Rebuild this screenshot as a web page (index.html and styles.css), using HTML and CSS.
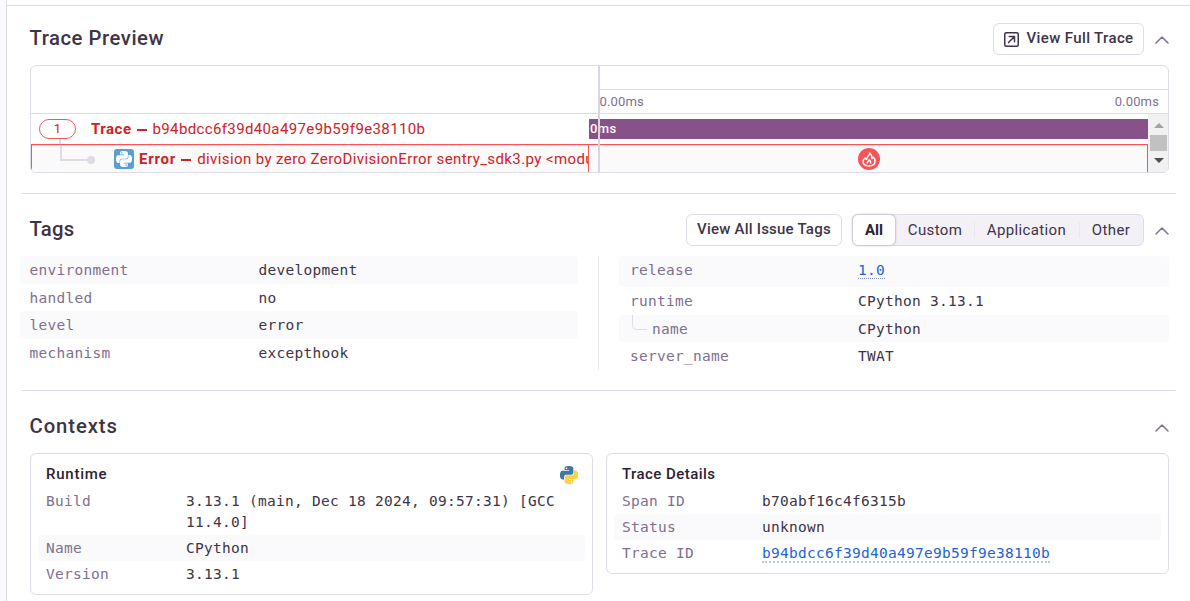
FILE: index.html
```html
<!DOCTYPE html>
<html lang="en">
<head>
<meta charset="utf-8">
<title>Issue details</title>
<link rel="stylesheet" href="styles.css">
</head>
<body>
<svg class="defs" width="0" height="0" aria-hidden="true">
  <symbol id="py-top" viewBox="0 0 24 24"><path d="M14.25.18l.9.2.73.26.59.3.45.32.34.34.25.34.16.33.1.3.04.26.02.2-.01.13V8.5l-.05.63-.13.55-.21.46-.26.38-.3.31-.33.25-.35.19-.35.14-.33.1-.3.07-.26.04-.21.02H8.77l-.69.05-.59.14-.5.22-.41.27-.33.32-.27.35-.2.36-.15.37-.1.35-.07.32-.04.27-.02.21v3.06H3.17l-.21-.03-.28-.07-.32-.12-.35-.18-.36-.26-.36-.36-.35-.46-.32-.59-.28-.73-.21-.88-.14-1.05-.05-1.23.06-1.22.16-1.04.24-.87.32-.71.36-.57.4-.44.42-.33.42-.24.4-.16.36-.1.32-.05.24-.01h.16l.06.01h8.16v-.83H6.18l-.01-2.75-.02-.37.05-.34.11-.31.17-.28.25-.26.31-.23.38-.2.44-.18.51-.15.58-.12.64-.1.71-.06.77-.04.84-.02 1.27.05zm-6.3 1.98l-.23.33-.08.41.08.41.23.34.33.22.41.09.41-.09.33-.22.23-.34.08-.41-.08-.41-.23-.33-.33-.22-.41-.09-.41.09z"/></symbol>
  <symbol id="py-bottom" viewBox="0 0 24 24"><path d="M21.04 6.11l.28.06.32.12.35.18.36.27.36.35.35.47.32.59.28.73.21.88.14 1.04.05 1.23-.06 1.23-.16 1.04-.24.86-.32.71-.36.57-.4.45-.42.33-.42.24-.4.16-.36.09-.32.05-.24.02-.16-.01h-8.22v.82h5.84l.01 2.76.02.36-.05.34-.11.31-.17.29-.25.25-.31.24-.38.2-.44.17-.51.15-.58.13-.64.09-.71.07-.77.04-.84.01-1.27-.04-1.07-.14-.9-.2-.73-.25-.59-.3-.45-.33-.34-.34-.25-.34-.16-.33-.1-.3-.04-.25-.02-.2.01-.13v-5.34l.05-.64.13-.54.21-.46.26-.38.3-.32.33-.24.35-.2.35-.14.33-.1.3-.06.26-.04.21-.02.13-.01h5.84l.69-.05.59-.14.5-.21.41-.28.33-.32.27-.35.2-.36.15-.36.1-.35.07-.32.04-.28.02-.21V6.07h2.09l.14.01zm-6.47 14.25l-.23.33-.08.41.08.41.23.33.33.23.41.08.41-.08.33-.23.23-.33.08-.41-.08-.41-.23-.33-.33-.23-.41-.08-.41.08z"/></symbol>
  <symbol id="chevron" viewBox="0 0 14 8"><path d="M1 7 7 1l6 6" fill="none" stroke="#80708f" stroke-width="1.5" stroke-linecap="round" stroke-linejoin="round"/></symbol>
</svg>
<div class="page">
  <main class="panel">
    <section class="section trace">
      <header class="head">
        <h2 class="title t-trace">Trace Preview</h2>
        <div class="actions">
          <button class="btn btn-trace">
            <svg width="15" height="15" viewBox="0 0 15 15" fill="none" stroke="#3e3446" stroke-width="1.5" stroke-linecap="round" stroke-linejoin="round"><rect x=".75" y=".75" width="13.5" height="13.5" rx="1.5"/><path d="M4.5 10.5 10.3 4.7M5.2 4.5h5.3v5.3"/></svg>
            <span>View Full Trace</span>
          </button>
          <svg class="chev" width="14" height="8"><use href="#chevron"/></svg>
        </div>
      </header>
      <div class="tracebox">
        <div class="scale">
          <div></div>
          <div class="ticks"><span>0.00ms</span><span>0.00ms</span></div>
        </div>
        <div class="body">
          <div class="rows">
            <div class="row">
              <div class="cell root"><span class="count">1</span><b class="b-trace">Trace</b><i class="dash"></i><span class="tid">b94bdcc6f39d40a497e9b59f9e38110b</span></div>
              <div class="bar">0ms</div>
            </div>
            <div class="row err">
              <div class="cell">
                <span class="link"></span>
                <span class="pyicon"><svg width="16" height="16" fill="#fff"><use href="#py-top"/><use href="#py-bottom"/></svg></span>
                <b class="b-error">Error</b><i class="dash"></i><span class="msg">division by zero ZeroDivisionError sentry_sdk3.py &lt;module&gt;</span>
              </div>
              <div class="lane">
                <span class="fire"><svg width="14" height="15" viewBox="0 0 14 15" fill="none" stroke="#fff" stroke-width="1.5" stroke-linejoin="round" stroke-linecap="round"><path d="M7.800 1C7.500 3.500 5 4.500 4.600 7.300L3 6C1.700 7 1 8.200 1 9.600c0 2.700 2.400 4.400 6 4.400s6-1.800 6-4.700c0-1.700-.6-3.200-1.900-4.300L9.900 6.400C9.900 4.200 9.200 2.300 7.800 1z"/><path d="M5.200 10.900C5.400 9.600 6.900 9.200 7.200 7.900 8.300 8.700 8.900 9.700 8.700 10.900"/></svg></span>
              </div>
            </div>
          </div>
          <div class="scroll"><i class="up"></i><i class="thumb"></i><i class="down"></i></div>
        </div>
        <span class="divider"></span>
      </div>
    </section>
    <section class="section tags">
      <header class="head">
        <h2 class="title t-tags">Tags</h2>
        <div class="actions">
          <button class="btn btn-tags"><span>View All Issue Tags</span></button>
          <div class="segs"><span class="seg on">All</span><span class="seg s2">Custom</span><span class="seg s3">Application</span><span class="seg s4">Other</span></div>
          <svg class="chev" width="14" height="8"><use href="#chevron"/></svg>
        </div>
      </header>
      <div class="cols">
        <div class="col">
          <div class="kv"><span>environment</span><em>development</em></div>
          <div class="kv"><span>handled</span><em>no</em></div>
          <div class="kv"><span>level</span><em>error</em></div>
          <div class="kv"><span>mechanism</span><em>excepthook</em></div>
        </div>
        <div class="sep"></div>
        <div class="col right">
          <div class="kv tall"><span>release</span><em><a class="dot">1.0</a></em></div>
          <div class="kv"><span>runtime</span><em>CPython 3.13.1</em></div>
          <div class="kv"><span class="child"><i></i>name</span><em>CPython</em></div>
          <div class="kv"><span>server_name</span><em>TWAT</em></div>
        </div>
      </div>
    </section>
    <section class="section contexts">
      <header class="head">
        <h2 class="title t-ctx">Contexts</h2>
        <svg class="chev" width="14" height="8"><use href="#chevron"/></svg>
      </header>
      <div class="cards">
        <div class="card">
          <div class="cardhead"><h3 class="h-run">Runtime</h3><svg width="18" height="18"><use href="#py-top" fill="#3d78a8"/><use href="#py-bottom" fill="#ffd141"/></svg></div>
          <div class="ck"><span>Build</span><em>3.13.1 (main, Dec 18 2024, 09:57:31) [GCC 11.4.0]</em></div>
          <div class="ck shade"><span>Name</span><em>CPython</em></div>
          <div class="ck"><span>Version</span><em>3.13.1</em></div>
        </div>
        <div class="card">
          <div class="cardhead"><h3 class="h-det">Trace Details</h3></div>
          <div class="ck"><span>Span ID</span><em>b70abf16c4f6315b</em></div>
          <div class="ck shade"><span>Status</span><em>unknown</em></div>
          <div class="ck"><span>Trace ID</span><em><a class="dots">b94bdcc6f39d40a497e9b59f9e38110b</a></em></div>
        </div>
      </div>
    </section>
  </main>
</div>
</body>
</html>
```
FILE: styles.css
```css
* { box-sizing: border-box; }
body { margin: 0; font-family: Roboto, sans-serif; color: #3e3446; background: #fafafc; overflow: hidden; }
.defs { position: absolute; }
h2, h3, em, i { margin: 0; font-style: normal; }
.page { height: 601px; padding-left: 6px; }
.panel { height: 601px; background: #fff; border-left: 1px solid #e0dce5; padding: 5px 0 0; }
.section { margin: 0 14px 0 15px; border-bottom: 1px solid #e0dce5; padding: 0 7px 0 8px; }
.panel::before { content: ""; display: block; height: 1px; background: #e0dce5; }
.head { display: flex; justify-content: space-between; align-items: center; height: 32px; }
.title { font-size: 20.3px; line-height: 24px; font-weight: 500; white-space: nowrap; padding-bottom: 2px; margin-left: -.5px; }
.t-trace { letter-spacing: .53px; }
.t-tags { letter-spacing: .3px; }
.t-ctx { letter-spacing: .9px; }
.actions { display: flex; align-items: center; }
.chev { flex: none; margin: 1px .5px 0 -.5px; }
.btn { height: 32px; font: 500 15px/20px Roboto, sans-serif; color: #3e3446; background: #fff; border: 1px solid #e0dce5; border-radius: 6px; display: flex; align-items: center; padding: 0 0 2px 10px; white-space: nowrap; }
.trace { height: 188px; padding-top: 17px; }
.btn-trace { width: 151px; margin-right: 11px; gap: 7.5px; letter-spacing: .37px; }
.btn-trace svg { position: relative; top: 1px; }
.tracebox { margin-top: 10px; height: 108px; border: 1px solid #e0dce5; border-radius: 6px; overflow: hidden; position: relative; font-size: 15px; }
.scale { height: 48px; border-bottom: 1px solid #e0dce5; display: grid; grid-template-columns: 568px 1fr; }
.ticks { margin-top: 23px; border-top: 1px solid #e0dce5; display: flex; justify-content: space-between; font-size: 13px; line-height: 23px; color: #80708f; padding: 0 9px 0 .5px; letter-spacing: .15px; }
.body { display: flex; height: 58px; }
.rows { width: 1117px; }
.row { height: 30px; display: grid; grid-template-columns: 558px 559px; align-items: center; }
.cell { display: flex; align-items: center; overflow: hidden; white-space: nowrap; color: #cf2126; height: 100%; }
.root { padding-left: 8px; }
.count { width: 37px; height: 20px; margin-right: 15px; border: 1px solid #f55459; border-radius: 10px; text-align: center; font-size: 13px; line-height: 18px; position: relative; }
.count::after { content: ""; position: absolute; left: 19px; top: 19px; width: 2px; height: 6px; background: #e0dce5; }
.cell b { font-weight: 700; }
.b-trace { letter-spacing: .5px; }
.b-error { letter-spacing: .8px; }
.tid { letter-spacing: .37px; }
.msg { letter-spacing: .4px; }
.dash { width: 10px; height: 1.5px; background: #cf2126; margin: 2px 6px 0 5px; flex: none; }
.bar { height: 20px; background: #875189; color: #fff; font-size: 13px; font-weight: 500; line-height: 19px; padding-left: 1px; letter-spacing: .4px; }
.err { background: #fafafa; border: solid #f55459; border-width: 1px 1px 0; }
.err { grid-template-columns: 557px 558px; box-shadow: inset 0 1px #fcd0d2; }
.err .cell { border-right: 1px solid #f55459; padding-bottom: 1px; }
.link { width: 33px; height: 16px; margin: -13px 21px 0 28px; border: solid #e0dce5; border-width: 0 0 2px 2px; flex: none; position: relative; }
.link::after { content: ""; position: absolute; right: -2px; bottom: -5px; width: 8px; height: 8px; border-radius: 50%; background: #e0dce5; }
.pyicon { width: 20px; height: 20px; border-radius: 3px; background: #5a9fd4; flex: none; margin-right: 5px; display: grid; place-items: center; }
.lane { display: flex; justify-content: center; padding: 0 0 1px 1px; }
.fire { width: 22px; height: 22px; border-radius: 50%; background: #f55459; display: grid; place-items: center; }
.scroll { width: 20px; background: #f1f1f1; display: flex; flex-direction: column; align-items: center; padding-left: 1px; }
.scroll i { flex: none; }
.up { margin-top: 9px; border: 5px solid transparent; border-top: 0; border-bottom-color: #a3a3a3; }
.thumb { width: 17px; height: 16px; margin-top: 7px; background: #c1c1c1; }
.down { margin-top: 7px; border: 5px solid transparent; border-bottom: 0; border-top-color: #505050; }
.divider { position: absolute; left: 567px; top: 0; width: 2px; height: 100%; background: #dad5e3; }
.tags { height: 197px; padding-top: 20px; }
.btn-tags { width: 156px; margin-right: 10px; letter-spacing: .22px; }
.segs { display: flex; width: 292px; height: 32px; margin-right: 11px; background: #f3f0f7; border: 1px solid #e0dce5; border-radius: 6px; font-size: 15px; line-height: 30px; }
.seg { text-align: center; white-space: nowrap; letter-spacing: .37px; }
.on { width: 44px; margin: -1px 0 -1px -1px; border: 1px solid #d0cbd8; border-radius: 6px; background: #fff; font-weight: 700; color: #2b2233; box-shadow: 0 0 2px #d0cbd8; letter-spacing: 0; }
.s2 { width: 78px; }
.s3 { width: 105px; }
.s4 { width: 64px; }
.s3, .s4 { background: linear-gradient(#ebe7f0, #ebe7f0) 0 50% / 1px 16px no-repeat; }
.cols { display: grid; grid-template-columns: 558px 20px 1px 20px 550px; margin: 10px 0 0 -10px; font: 14.5px/27px "DejaVu Sans Mono", monospace; letter-spacing: .27px; }
.sep { grid-column: 3; background: #ebe8ef; }
.right { grid-column: 5; }
.kv { display: grid; grid-template-columns: 229px 1fr; height: 27.5px; padding-left: 9.5px; border-radius: 4px; line-height: 28.5px; }
.right .kv { padding-left: 11px; grid-template-columns: 228px 1fr; }
.kv span, .ck span { color: #80708f; }
.kv em, .ck em { color: #3e3446; }
.kv:nth-child(odd) { background: #fafafc; }
.right .tall { height: 31px; }
.child { display: flex; }
.child i { width: 15px; height: 15px; margin: 0 5px 0 2px; border: solid #e0dce5; border-width: 0 0 1px 1px; border-bottom-left-radius: 5px; }
.kv em a, .ck em a { color: #2562d4; }
.dot { display: inline-block; line-height: 16px; border-bottom: 1px dotted #7c8fc4; }
.dots { display: inline-block; line-height: 16px; border-bottom: 2px dotted #b3c7f1; }
.contexts { border: 0; padding-top: 20px; }
.cards { display: grid; grid-template-columns: 563px 563px; gap: 13px; align-items: start; margin-top: 10px; }
.card { border: 1px solid #e0dce5; border-radius: 6px; padding: 7px; font: 14.5px/21px "DejaVu Sans Mono", monospace; letter-spacing: .27px; }
.cardhead { display: flex; justify-content: space-between; align-items: center; height: 27px; padding: 0 7px 1px 8px; }
.cardhead svg { position: relative; top: 1px; }
h3 { font: 500 15px/20px Roboto, sans-serif; color: #2b2233; }
.h-run { letter-spacing: .75px; }
.h-det { letter-spacing: .45px; }
.ck { display: grid; grid-template-columns: 140px 1fr; padding: 3px 8px 2px; border-radius: 4px; }
.shade { background: #fafafc; }
```
